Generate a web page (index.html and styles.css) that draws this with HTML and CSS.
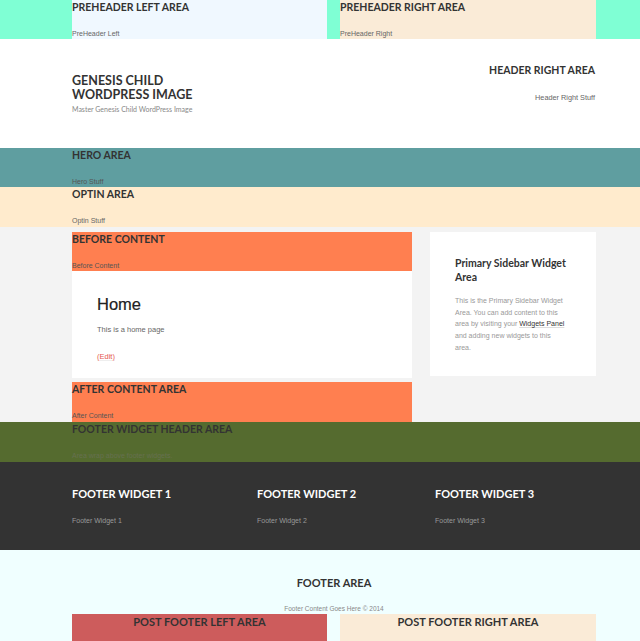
FILE: index.html
```html
<!DOCTYPE html>
<html lang="en">
<head>
<meta charset="utf-8">
<title>Genesis Child WordPress Image</title>
<link rel="stylesheet" href="styles.css">
</head>
<body>
<div class="preheader">
  <div class="wrap two-col">
    <section class="widget-area pre-left">
      <h4 class="widget-title">PreHeader Left Area</h4>
      <p>PreHeader Left</p>
    </section>
    <section class="widget-area pre-right">
      <h4 class="widget-title">PreHeader Right Area</h4>
      <p>PreHeader Right</p>
    </section>
  </div>
</div>

<header class="site-header">
  <div class="wrap header-row">
    <div class="title-area">
      <h1 class="site-title">Genesis Child<br>WordPress Image</h1>
      <p class="site-description">Master Genesis Child WordPress Image</p>
    </div>
    <div class="header-right">
      <h4 class="widget-title">Header Right Area</h4>
      <p>Header Right Stuff</p>
    </div>
  </div>
</header>

<div class="hero">
  <div class="wrap widget-area">
    <h4 class="widget-title">Hero Area</h4>
    <p>Hero Stuff</p>
  </div>
</div>

<div class="optin">
  <div class="wrap widget-area tall">
    <h4 class="widget-title">Optin Area</h4>
    <p>Optin Stuff</p>
  </div>
</div>

<div class="site-inner">
  <div class="wrap content-row">
    <div class="content-col">
      <section class="widget-area coral">
        <h4 class="widget-title">Before Content</h4>
        <p>Before Content</p>
      </section>
      <article class="entry">
        <h1 class="entry-title">Home</h1>
        <p class="entry-text">This is a home page</p>
        <p class="entry-edit"><a href="#">(Edit)</a></p>
      </article>
      <section class="widget-area coral after tall">
        <h4 class="widget-title">After Content Area</h4>
        <p>After Content</p>
      </section>
    </div>
    <aside class="sidebar">
      <h4 class="sidebar-title">Primary Sidebar Widget Area</h4>
      <p class="sidebar-text">This is the Primary Sidebar Widget Area. You can add content to this area by visiting your <a href="#">Widgets Panel</a> and adding new widgets to this area.</p>
    </aside>
  </div>
</div>

<div class="footer-widget-header">
  <div class="wrap widget-area tall">
    <h4 class="widget-title">Footer Widget Header Area</h4>
    <p>Area wrap above footer widgets.</p>
  </div>
</div>

<div class="footer-widgets">
  <div class="wrap fw-row">
    <div class="fw">
      <h4 class="fw-title">Footer Widget 1</h4>
      <p>Footer Widget 1</p>
    </div>
    <div class="fw">
      <h4 class="fw-title">Footer Widget 2</h4>
      <p>Footer Widget 2</p>
    </div>
    <div class="fw">
      <h4 class="fw-title">Footer Widget 3</h4>
      <p>Footer Widget 3</p>
    </div>
  </div>
</div>

<footer class="site-footer">
  <div class="wrap footer-inner">
    <h4 class="footer-title">Footer Area</h4>
    <p class="footer-text">Footer Content Goes Here &copy; 2014</p>
  </div>
  <div class="wrap two-col">
    <section class="post-footer pf-left">
      <h4 class="pf-title">Post Footer Left Area</h4>
    </section>
    <section class="post-footer pf-right">
      <h4 class="pf-title">Post Footer Right Area</h4>
    </section>
  </div>
</footer>
</body>
</html>
```

FILE: styles.css
```css
* { box-sizing: border-box; }

body {
  margin: 0;
  font-family: "Liberation Sans", Arial, sans-serif;
  color: #666;
  background: #fff;
}

h1, h4, p { margin: 0; }

.wrap {
  width: 524px;
  margin-left: 72px;
}

.two-col {
  display: grid;
  grid-template-columns: 255px 256px;
  column-gap: 13px;
}

/* generic widget area */
.widget-title {
  font-family: Lato, "Open Sans", sans-serif;
  font-weight: 700;
  font-size: 10.5px;
  line-height: 14px;
  text-transform: uppercase;
  color: #333;
}

.widget-area p {
  margin-top: 15px;
  font-size: 7px;
  line-height: 10px;
  color: #666;
}

.widget-area.tall { padding-bottom: 1px; }

/* preheader */
.preheader { background: #7fffd4; }
.pre-left { background: #f0f8ff; }
.pre-right { background: #faebd7; }

/* header */
.site-header { background: #fff; height: 109px; }
.header-row {
  display: flex;
  justify-content: space-between;
  align-items: flex-start;
}
.title-area { padding-top: 35px; }
.site-title {
  font-family: Lato, "Open Sans", sans-serif;
  font-weight: 700;
  font-size: 12.5px;
  line-height: 13.5px;
  text-transform: uppercase;
  color: #333;
}
.site-description {
  margin-top: 3px;
  font-family: Lato, "Open Sans", sans-serif;
  font-size: 7px;
  line-height: 11px;
  color: #888;
}
.header-right {
  padding-top: 24px;
  text-align: right;
  margin-right: 1px;
}
.header-right p {
  margin-top: 15px;
  font-size: 7.3px;
  line-height: 11px;
  color: #666;
}

/* hero / optin */
.hero { background: #5f9ea0; }
.hero p { color: #555; }
.optin { background: #ffebcd; }

/* content area */
.site-inner {
  background: #f3f3f3;
  padding-top: 5px;
}
.content-row {
  display: grid;
  grid-template-columns: 340px 166px;
  column-gap: 18px;
  align-items: start;
}
.coral { background: #ff7f50; }
.coral p { color: #555; }
.after { margin-top: 4px; }

.entry {
  background: #fff;
  padding: 23px 25px 15px;
}
.entry-title {
  font-family: "Liberation Sans", Arial, sans-serif;
  font-weight: 400;
  font-size: 16.5px;
  line-height: 20px;
  color: #222;
  -webkit-text-stroke: 0.2px #222;
}
.entry-text {
  margin-top: 10px;
  font-size: 7.5px;
  line-height: 12px;
  color: #666;
}
.entry-edit {
  margin-top: 15px;
  font-size: 7.5px;
  line-height: 12px;
}
.entry-edit a {
  color: #e5554e;
  text-decoration: underline;
  text-decoration-color: #eee;
}

.sidebar {
  background: #fff;
  padding: 25px 20px 22px 25px;
  min-height: 144px;
}
.sidebar-title {
  font-family: Lato, "Open Sans", sans-serif;
  font-weight: 700;
  font-size: 10.5px;
  line-height: 13.5px;
  color: #333;
}
.sidebar-text {
  max-width: 111px;
  margin-top: 11px;
  font-size: 7px;
  line-height: 11.7px;
  color: #999;
}
.sidebar-text a {
  color: #333;
  text-decoration: underline;
  text-decoration-color: #ddd;
}

/* footer widget header */
.footer-widget-header { background: #556b2f; }
.footer-widget-header .widget-title { color: #333; }
.footer-widget-header p { color: #66704f; }

/* footer widgets */
.footer-widgets {
  background: #333;
  padding: 25px 0 24px;
}
.fw-row {
  display: grid;
  grid-template-columns: 185px 178px 1fr;
}
.fw-title {
  font-family: Lato, "Open Sans", sans-serif;
  font-weight: 700;
  font-size: 11px;
  line-height: 13px;
  text-transform: uppercase;
  color: #fff;
}
.fw p {
  margin-top: 15px;
  font-size: 7px;
  line-height: 11px;
  color: #999;
}

/* footer */
.site-footer {
  background: #f0ffff;
  padding-top: 26px;
}
.footer-inner { text-align: center; }
.footer-title {
  font-family: Lato, "Open Sans", sans-serif;
  font-weight: 700;
  font-size: 11px;
  line-height: 13px;
  text-transform: uppercase;
  color: #333;
}
.footer-text {
  margin-top: 15px;
  font-size: 6.5px;
  line-height: 10px;
  color: #888;
}
.post-footer {
  height: 40px;
  text-align: center;
}
.pf-left { background: #cd5c5c; }
.pf-right { background: #faebd7; }
.pf-title {
  font-family: Lato, "Open Sans", sans-serif;
  font-weight: 700;
  font-size: 11px;
  line-height: 15px;
  text-transform: uppercase;
  color: #333;
}
```
